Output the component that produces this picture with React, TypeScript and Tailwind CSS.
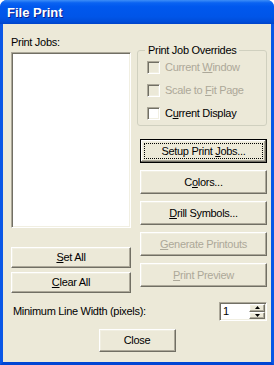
const raised =
  "bg-[#ECE9D8] border border-t-white border-l-white border-r-[#716F64] border-b-[#716F64] shadow-[inset_-1px_-1px_#ACA899,inset_1px_1px_#F1EFE2]";
const sunken =
  "border border-t-[#ACA899] border-l-[#ACA899] border-r-white border-b-white shadow-[inset_1px_1px_#716F64,inset_-1px_-1px_#F1EFE2]";

function Button({
  children,
  disabled,
  focused,
  className,
}: {
  children: React.ReactNode;
  disabled?: boolean;
  focused?: boolean;
  className: string;
}) {
  if (focused) {
    return (
      <div
        className={
          "flex bg-[#ECE9D8] border border-black shadow-[inset_-1px_-1px_#716F64,inset_1px_1px_#fff,inset_-2px_-2px_#ACA899,inset_2px_2px_#F1EFE2] " +
          className
        }
      >
        <div className="m-[3px] flex flex-1 items-center justify-center border border-dotted border-black">
          {children}
        </div>
      </div>
    );
  }
  return (
    <div
      className={
        raised +
        " flex items-center justify-center " +
        (disabled ? "text-[#ACA899] " : "text-black ") +
        className
      }
    >
      {children}
    </div>
  );
}

function Check({ label, disabled }: { label: React.ReactNode; disabled?: boolean }) {
  return (
    <div className="flex h-[13px] items-center gap-[5px] pl-[9px]">
      <div
        className={
          sunken + " h-[13px] w-[13px] shrink-0 " + (disabled ? "bg-[#ECE9D8]" : "bg-white")
        }
      />
      <span className={disabled ? "text-[#ACA899]" : "text-black"}>{label}</span>
    </div>
  );
}

function Arrow({ up }: { up?: boolean }) {
  return (
    <svg width="5" height="3" viewBox="0 0 5 3">
      <polygon points={up ? "2.5,0 5,3 0,3" : "0,0 5,0 2.5,3"} fill="#000" />
    </svg>
  );
}

export default function App() {
  return (
    <div className="h-[365px] w-[274px] bg-white font-['Liberation_Sans',Arial,sans-serif] text-[11px] leading-[13px] tracking-[-0.3px] text-black">
      <div className="flex h-full flex-col overflow-hidden rounded-t-[7px] bg-[#0054E3]">
        {/* title bar */}
        <div className="flex h-[24px] shrink-0 items-center bg-[linear-gradient(to_bottom,#3D8EF7_0%,#0A63F2_12%,#0058EE_28%,#0055E8_70%,#004DDA_90%,#0043C9_100%)] pl-[7px]">
          <span className="text-[13px] font-bold tracking-normal text-white [text-shadow:1px_1px_#0A1E8C]">
            File Print
          </span>
        </div>

        {/* client area */}
        <div className="flex flex-1 flex-col border-x-[3px] border-b-[3px] border-x-[#0A57E6] border-b-[#0046D4] bg-[#ECE9D8] pl-[8px] pr-[4px] pt-[12px]">
          <div className="flex items-start">
            {/* left column */}
            <div className="flex w-[120px] flex-col">
              <div className="h-[13px]">Print Jobs:</div>
              <div className={sunken + " mt-[3px] h-[176px] bg-white"} />
              <Button className="mt-[19px] h-[21px]">
                <span>
                  <u>S</u>et All
                </span>
              </Button>
              <Button className="mt-[4px] h-[21px]">
                <span>
                  <u>C</u>lear All
                </span>
              </Button>
            </div>

            {/* right column */}
            <div className="ml-[6px] mt-[8px] flex flex-1 flex-col">
              <fieldset className="rounded-[3px] border border-[#D0D0BF] pb-[5px]">
                <legend className="ml-[7px] px-[3px]">Print Job Overrides</legend>
                <div className="mt-[4px] flex flex-col gap-[10px]">
                  <Check
                    disabled
                    label={
                      <>
                        Current <u>W</u>indow
                      </>
                    }
                  />
                  <Check
                    disabled
                    label={
                      <>
                        Scale to <u>F</u>it Page
                      </>
                    }
                  />
                  <Check
                    label={
                      <>
                        C<u>u</u>rrent Display
                      </>
                    }
                  />
                </div>
              </fieldset>
              <div className="ml-[3px] mt-[13px] flex flex-col gap-[7px]">
                <Button focused className="h-[24px]">
                  <span>
                    Setup Print <u>J</u>obs...
                  </span>
                </Button>
                <Button className="h-[24px]">
                  <span>
                    C<u>o</u>lors...
                  </span>
                </Button>
                <Button className="h-[24px]">
                  <span>
                    <u>D</u>rill Symbols...
                  </span>
                </Button>
                <Button disabled className="h-[24px]">
                  <span>
                    <u>G</u>enerate Printouts
                  </span>
                </Button>
                <Button disabled className="h-[24px]">
                  <span>
                    <u>P</u>rint Preview
                  </span>
                </Button>
              </div>
            </div>
          </div>

          {/* bottom row */}
          <div className="mt-[9px] flex h-[19px] items-center justify-between">
            <span className="pl-[2px]">Minimum Line Width (pixels):</span>
            <div className={sunken + " flex h-[19px] w-[48px] bg-white p-[1px]"}>
              <span className="flex-1 pl-[2px] leading-[15px]">1</span>
              <div className="flex w-[16px] flex-col">
                <div className={raised + " flex flex-1 items-center justify-center"}>
                  <Arrow up />
                </div>
                <div className={raised + " flex flex-1 items-center justify-center"}>
                  <Arrow />
                </div>
              </div>
            </div>
          </div>

          <div className="mt-[8px] flex justify-center">
            <Button className="ml-[-4px] h-[23px] w-[77px]">
              <span>Close</span>
            </Button>
          </div>
        </div>
      </div>
    </div>
  );
}
